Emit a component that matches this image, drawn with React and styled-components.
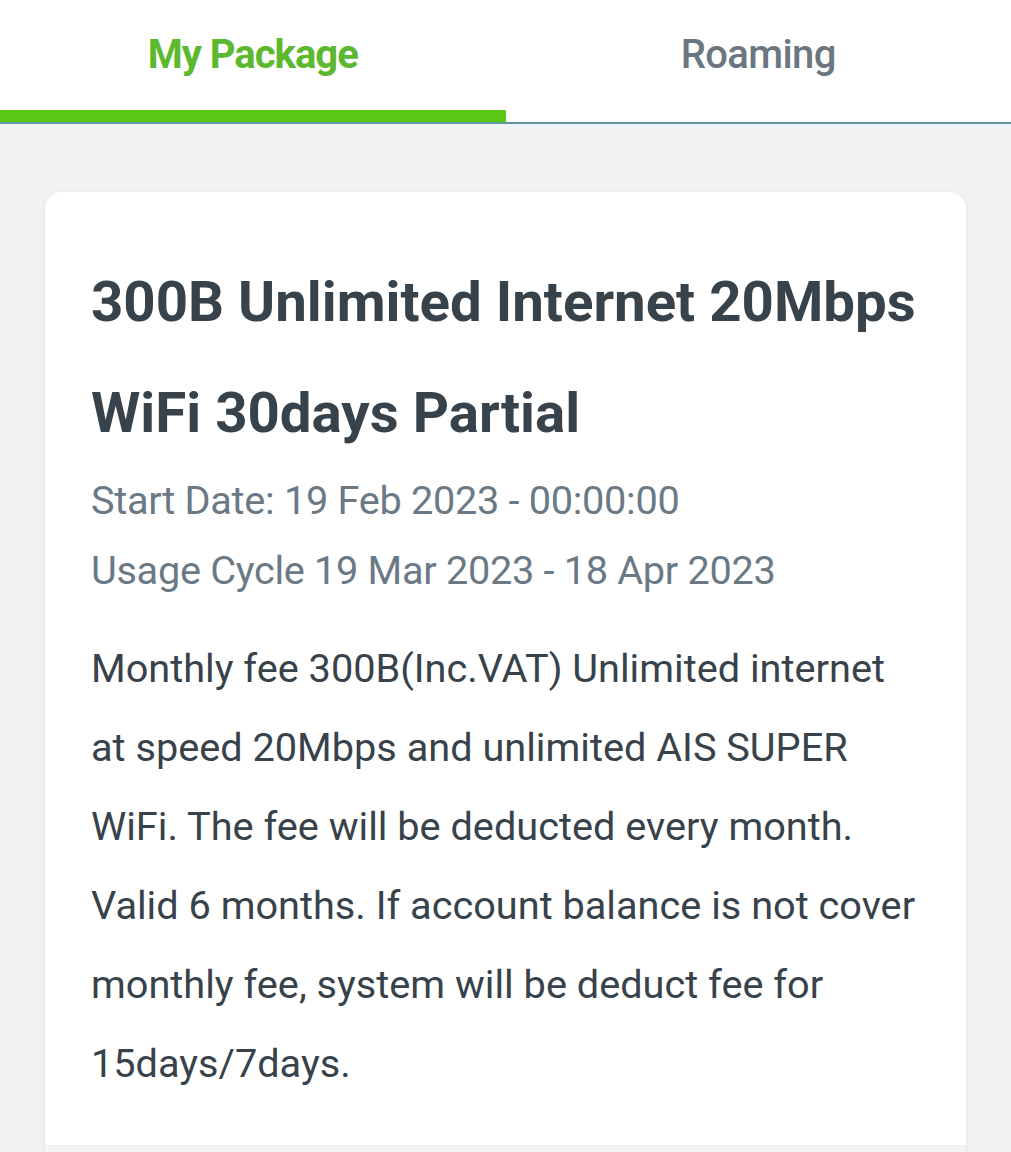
import React, { useState } from "react";
import styled, { createGlobalStyle } from "styled-components";

const GlobalStyle = createGlobalStyle`
  html, body {
    margin: 0;
    padding: 0;
    background: #f1f2f4;
    font-family: Roboto, "Liberation Sans", Arial, sans-serif;
  }
`;

const tabs = [
  { id: "package", label: "My Package" },
  { id: "roaming", label: "Roaming" },
];

const App = () => {
  const [active, setActive] = useState("package");

  return (
    <Page>
      <GlobalStyle />
      <TabBar>
        {tabs.map((tab) => (
          <Tab
            key={tab.id}
            $active={active === tab.id}
            onClick={() => setActive(tab.id)}
          >
            {tab.label}
          </Tab>
        ))}
      </TabBar>
      <Content>
        <Card>
          <CardBody>
            <Title>300B Unlimited Internet 20Mbps WiFi 30days Partial</Title>
            <Meta>
              <MetaLine>Start Date: 19 Feb 2023 - 00:00:00</MetaLine>
              <MetaLine>Usage Cycle 19 Mar 2023 - 18 Apr 2023</MetaLine>
            </Meta>
            <Description>
              Monthly fee 300B(Inc.VAT) Unlimited internet at speed 20Mbps and
              unlimited AIS SUPER WiFi. The fee will be deducted every month.
              Valid 6 months. If account balance is not cover monthly fee,
              system will be deduct fee for 15days/7days.
            </Description>
          </CardBody>
          <CardFooter />
        </Card>
      </Content>
    </Page>
  );
};

const Page = styled.div`
  min-height: 1152px;
  background: #f1f2f4;
`;

const TabBar = styled.nav`
  display: grid;
  grid-template-columns: 1fr 1fr;
  background: #fff;
  border-bottom: 2px solid #5c9aa0;
`;

const Tab = styled.button`
  height: 122px;
  border: none;
  background: transparent;
  padding: 0 0 14px;
  font-family: Roboto, "Liberation Sans", Arial, sans-serif;
  font-size: 40px;
  font-weight: ${({ $active }) => ($active ? 700 : 500)};
  letter-spacing: ${({ $active }) => ($active ? "-1px" : "-0.6px")};
  color: ${({ $active }) => ($active ? "#5cb82e" : "#6b7680")};
  box-shadow: ${({ $active }) =>
    $active ? "inset 0 -12px 0 #5cc614" : "none"};
  cursor: pointer;
`;

const Content = styled.main`
  padding: 68px 45px 0;
`;

const Card = styled.section`
  background: #fff;
  border-radius: 16px;
  box-shadow: 0 1px 4px rgba(0, 0, 0, 0.08);
  overflow: hidden;
`;

const CardBody = styled.div`
  padding: 55px 40px 42px 46px;
`;

const Title = styled.h1`
  margin: 0;
  font-size: 56.4px;
  line-height: 111px;
  font-weight: 700;
  letter-spacing: 0;
  color: #37424b;
`;

const Meta = styled.div`
  margin-top: -3px;
`;

const MetaLine = styled.p`
  margin: 0;
  font-size: 39.7px;
  line-height: 70px;
  letter-spacing: -0.3px;
  color: #6b7985;
`;

const Description = styled.p`
  margin: 23px 0 0;
  font-size: 39.7px;
  line-height: 79px;
  color: #37424b;
`;

const CardFooter = styled.div`
  height: 40px;
  background: #f2f3f5;
  border-top: 1px solid #eceef0;
`;

export default App;
